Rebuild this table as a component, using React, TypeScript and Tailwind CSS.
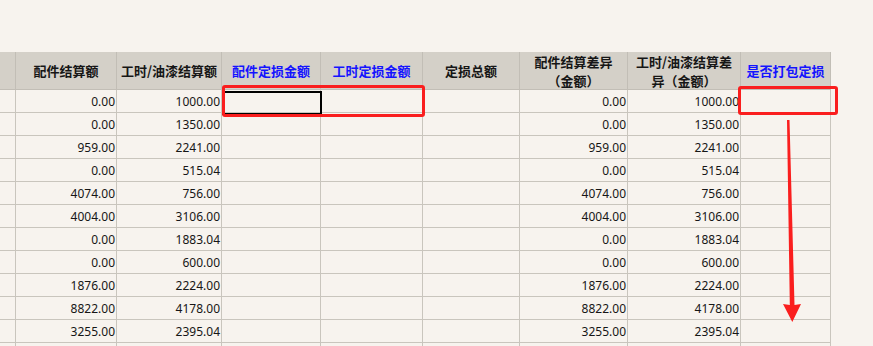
import React from 'react';

// column widths include the right border
const cols = [
  { w: 'w-[16px]', label: '' },
  { w: 'w-[101px]', label: '配件结算额' },
  { w: 'w-[105px]', label: '工时/油漆结算额' },
  { w: 'w-[99px]', label: '配件定损金额', blue: true },
  { w: 'w-[102px]', label: '工时定损金额', blue: true },
  { w: 'w-[97px]', label: '定损总额' },
  { w: 'w-[108px]', label: '配件结算差异', sub: '（金额）' },
  { w: 'w-[113px]', label: '工时/油漆结算差', sub: '异（金额）' },
  { w: 'w-[90px]', label: '是否打包定损', blue: true },
];

const rows: [string, string][] = [
  ['0.00', '1000.00'],
  ['0.00', '1350.00'],
  ['959.00', '2241.00'],
  ['0.00', '515.04'],
  ['4074.00', '756.00'],
  ['4004.00', '3106.00'],
  ['0.00', '1883.04'],
  ['0.00', '600.00'],
  ['1876.00', '2224.00'],
  ['8822.00', '4178.00'],
  ['3255.00', '2395.04'],
  ['', ''],
];

const HeaderRow = () => (
  <div className="flex h-[38px] bg-[#d4d0c8] border-b border-[#c2beb6]">
    {cols.map((c, i) => (
      <div
        key={i}
        className={`${c.w} shrink-0 h-full border-r border-[#c2beb6] flex flex-col items-center justify-center text-center text-[13px] leading-[19px] font-bold whitespace-nowrap ${c.blue ? 'text-[#1414ff]' : 'text-[#161616]'}`}
      >
        <span>{c.label}</span>
        {c.sub && <span>{c.sub}</span>}
      </div>
    ))}
  </div>
);

const DataRow = ({ a, b }: { a: string; b: string }) => {
  const vals = ['', a, b, '', '', '', a, b, ''];
  return (
    <div className="flex h-[23px] border-b border-[#c9c5bd]">
      {cols.map((c, i) => (
        <div
          key={i}
          className={`${c.w} shrink-0 h-full border-r border-[#c9c5bd] flex items-center justify-end pr-[1px] pt-[2px] text-[12px] text-[#161616] font-['Noto_Sans',sans-serif]`}
        >
          {vals[i]}
        </div>
      ))}
    </div>
  );
};

export default function App() {
  return (
    <div className="relative w-[873px] h-[346px] overflow-hidden bg-[#f7f3ee] font-['Noto_Sans_CJK_SC',sans-serif]">
      <div className="h-[52px]" />
      <div className="w-[831px] flex flex-col">
        <HeaderRow />
        {rows.map((r, i) => (
          <DataRow key={i} a={r[0]} b={r[1]} />
        ))}
      </div>

      {/* selected cell */}
      <div className="absolute left-[222px] top-[91px] w-[100px] h-[24px] border-2 border-black" />

      {/* red annotation boxes */}
      <div className="absolute left-[222px] top-[85px] w-[203px] h-[32px] border-[3px] border-[#fa1e1e] rounded-[3px]" />
      <div className="absolute left-[738px] top-[86px] w-[100px] h-[29px] border-[3px] border-[#fa1e1e] rounded-[3px]" />

      {/* arrow */}
      <svg className="absolute left-0 top-0" width="873" height="346" viewBox="0 0 873 346">
        <polygon
          points="787,120 789.5,120 794.5,305 801,304 792.3,322 783,304 789.8,305"
          fill="#fa1e1e"
        />
      </svg>
    </div>
  );
}
